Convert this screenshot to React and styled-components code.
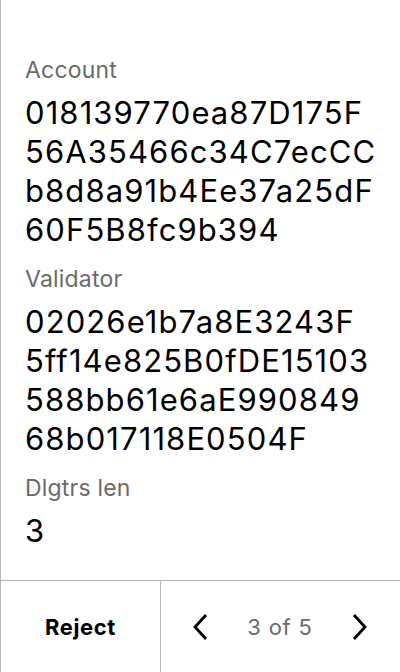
import React from 'react';
import styled, { createGlobalStyle } from 'styled-components';

const Global = createGlobalStyle`
body {
  margin: 0;
  background: #ffffff;
  font-family: Inter, "Noto Sans", sans-serif;
}
`;

const Screen = styled.div`
display: flex;
flex-direction: column;
width: 400px;
height: 672px;
box-sizing: border-box;
border-left: 1px solid #b5b5b5;
background: #ffffff;
`;

const Body = styled.div`
flex: 1;
display: flex;
flex-direction: column;
gap: 15px;
padding: 55px 0 0 24px;
`;

const Field = styled.div`
display: flex;
flex-direction: column;
`;

const Label = styled.div`
color: #6a6a6a;
font-size: 23px;
line-height: 30px;
letter-spacing: 0.2px;
margin-bottom: 8px;
`;

const Line = styled.div`
color: #000000;
font-size: 31px;
line-height: 39px;
letter-spacing: 1.1px;
white-space: nowrap;
`;

const Footer = styled.div`
display: flex;
height: 92px;
border-top: 1px solid #b5b5b5;
box-sizing: border-box;
`;

const RejectButton = styled.div`
width: 160px;
display: flex;
align-items: center;
justify-content: center;
font-size: 22px;
font-weight: 700;
letter-spacing: 0.6px;
color: #000000;
border-right: 1px solid #b5b5b5;
box-sizing: border-box;
`;

const Pager = styled.div`
flex: 1;
display: flex;
align-items: center;
justify-content: space-between;
padding: 0 30px 0 29px;
`;

const PageText = styled.span`
font-size: 22px;
letter-spacing: 0.8px;
color: #6a6a6a;
`;

const Chevron = ({ dir }) => (
  <svg width="20" height="28" viewBox="0 0 20 28" fill="none">
    {dir === 'left' ? (
      <path d="M16 2 L5 14 L16 26" stroke="#000" strokeWidth="2.8" />
    ) : (
      <path d="M4 2 L15 14 L4 26" stroke="#000" strokeWidth="2.8" />
    )}
  </svg>
);

const fields = [
  {
    label: 'Account',
    lines: ['018139770ea87D175F', '56A35466c34C7ecCC', 'b8d8a91b4Ee37a25dF', '60F5B8fc9b394'],
  },
  {
    label: 'Validator',
    lines: ['02026e1b7a8E3243F', '5ff14e825B0fDE15103', '588bb61e6aE990849', '68b017118E0504F'],
  },
  { label: 'Dlgtrs len', lines: ['3'] },
];

export default function App() {
  return (
    <>
      <Global />
      <Screen>
        <Body>
          {fields.map((f) => (
            <Field key={f.label}>
              <Label>{f.label}</Label>
              {f.lines.map((l) => (
                <Line key={l}>{l}</Line>
              ))}
            </Field>
          ))}
        </Body>
        <Footer>
          <RejectButton>Reject</RejectButton>
          <Pager>
            <Chevron dir="left" />
            <PageText>3 of 5</PageText>
            <Chevron dir="right" />
          </Pager>
        </Footer>
      </Screen>
    </>
  );
}
